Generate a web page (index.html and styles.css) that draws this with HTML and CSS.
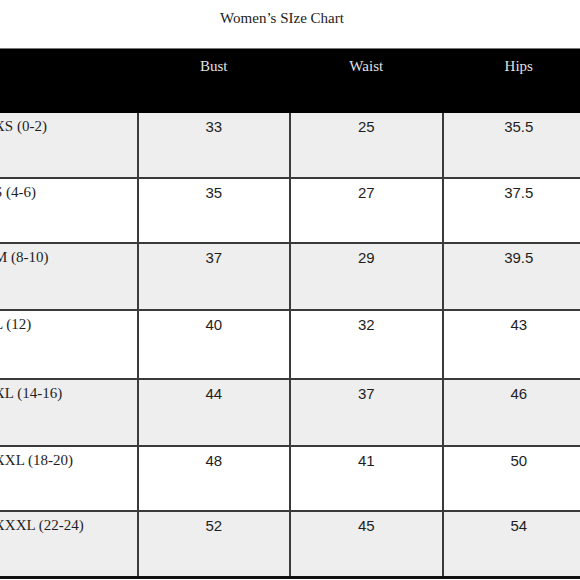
FILE: index.html
```html
<!DOCTYPE html>
<html lang="en">
<head>
<meta charset="utf-8">
<title>Women’s Size Chart</title>
<link rel="stylesheet" href="styles.css">
</head>
<body>
<div class="page">
  <h1 class="title">Women’s SIze Chart</h1>
  <div class="table-wrap">
    <table class="chart">
      <thead>
        <tr>
          <th class="label"></th>
          <th>Bust</th>
          <th>Waist</th>
          <th>Hips</th>
        </tr>
      </thead>
      <tbody>
        <tr class="alt"><td class="label">XS (0-2)</td><td>33</td><td>25</td><td>35.5</td></tr>
        <tr><td class="label">S (4-6)</td><td>35</td><td>27</td><td>37.5</td></tr>
        <tr class="alt"><td class="label">M (8-10)</td><td>37</td><td>29</td><td>39.5</td></tr>
        <tr class="tall"><td class="label">L (12)</td><td>40</td><td>32</td><td>43</td></tr>
        <tr class="alt"><td class="label">XL (14-16)</td><td>44</td><td>37</td><td>46</td></tr>
        <tr><td class="label">XXL (18-20)</td><td>48</td><td>41</td><td>50</td></tr>
        <tr class="alt"><td class="label">XXXL (22-24)</td><td>52</td><td>45</td><td>54</td></tr>
      </tbody>
    </table>
  </div>
</div>
</body>
</html>
```
FILE: styles.css
```css
html, body {
  margin: 0;
  padding: 0;
  background: #ffffff;
  overflow: hidden;
}

.page {
  width: 580px;
  height: 580px;
  overflow: hidden;
  font-family: "Liberation Serif", "Times New Roman", serif;
  color: #222;
}

.title {
  margin: 0;
  padding: 10px 16px 0 0;
  height: 38px;
  font-size: 15px;
  font-weight: normal;
  line-height: 17px;
  text-align: center;
  color: #222;
}

.table-wrap {
  margin-left: -16px;
  width: 612px;
  border-top: 1px solid #777;
}

.chart {
  width: 612px;
  border-collapse: collapse;
  table-layout: fixed;
  border-bottom: 3px solid #111;
}

.chart thead th {
  background: #000;
  color: #e2e2e2;
  font-family: "Liberation Serif", "Times New Roman", serif;
  font-weight: normal;
  font-size: 15px;
  line-height: 17px;
  height: 64px;
  padding: 9px 0 0;
  vertical-align: top;
  text-align: center;
  box-sizing: border-box;
}

.chart td {
  height: 65px;
  box-sizing: border-box;
  padding: 5px 0 0;
  vertical-align: top;
  text-align: center;
  font-family: "Liberation Sans", Arial, sans-serif;
  font-size: 15px;
  line-height: 17px;
  color: #1e1e1e;
  border: 2px solid #3a3a3a;
  background: #ffffff;
}

.chart tr.alt td {
  background: #eeeeee;
}

.chart tbody tr:nth-child(3) td,
.chart tbody tr:nth-child(5) td {
  height: 67px;
}

.chart tr.tall td {
  height: 69px;
}

.chart tbody tr:last-child td {
  height: 66px;
}

.chart td.label {
  text-align: left;
  padding-left: 8px;
  font-family: "Liberation Serif", "Times New Roman", serif;
  white-space: nowrap;
}

.chart tbody tr:first-child td {
  border-top: none;
}
```
